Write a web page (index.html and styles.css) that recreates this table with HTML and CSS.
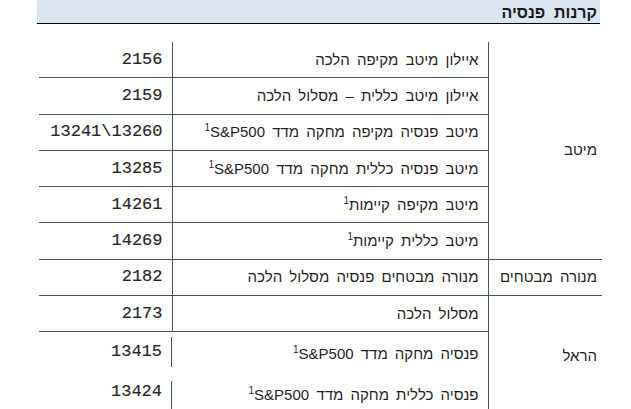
FILE: index.html
```html
<!DOCTYPE html>
<html lang="he" dir="rtl">
<head>
<meta charset="utf-8">
<title>קרנות פנסיה</title>
<link rel="stylesheet" href="styles.css">
</head>
<body>
<div class="sheet">
  <h1 class="title">קרנות&nbsp; פנסיה</h1>
  <table class="funds">
    <colgroup>
      <col class="c-group">
      <col class="c-name">
      <col class="c-num">
    </colgroup>
    <tbody>
      <tr>
        <td class="group" rowspan="6">מיטב</td>
        <td class="name">איילון מיטב מקיפה הלכה</td>
        <td class="num">2156</td>
      </tr>
      <tr>
        <td class="name">איילון מיטב כללית – מסלול הלכה</td>
        <td class="num">2159</td>
      </tr>
      <tr>
        <td class="name">מיטב פנסיה מקיפה מחקה מדד S&amp;P500<sup class="fn">1</sup></td>
        <td class="num">13241\13260</td>
      </tr>
      <tr>
        <td class="name">מיטב פנסיה כללית מחקה מדד S&amp;P500<sup class="fn">1</sup></td>
        <td class="num">13285</td>
      </tr>
      <tr>
        <td class="name">מיטב מקיפה קיימות<sup class="fn">1</sup></td>
        <td class="num">14261</td>
      </tr>
      <tr>
        <td class="name">מיטב כללית קיימות<sup class="fn">1</sup></td>
        <td class="num">14269</td>
      </tr>
      <tr>
        <td class="group">מנורה מבטחים</td>
        <td class="name">מנורה מבטחים פנסיה מסלול הלכה</td>
        <td class="num">2182</td>
      </tr>
      <tr>
        <td class="group" rowspan="3">הראל</td>
        <td class="name">מסלול הלכה</td>
        <td class="num">2173</td>
      </tr>
      <tr class="open">
        <td class="name name-open">פנסיה מחקה מדד S&amp;P500<sup class="fn">1</sup></td>
        <td class="num num-split"><div class="num-box">13415</div></td>
      </tr>
      <tr class="open">
        <td class="name name-open">פנסיה כללית מחקה מדד S&amp;P500<sup class="fn">1</sup></td>
        <td class="num num-split num-split-last"><div class="num-box num-box-last">13424</div></td>
      </tr>
    </tbody>
  </table>
</div>
</body>
</html>
```

FILE: styles.css
```css
html, body {
  margin: 0;
  padding: 0;
  background: #ffffff;
}

body {
  font-family: "Liberation Sans", Arial, sans-serif;
  color: #1f1f1f;
}

.sheet {
  width: 631px;
}

.title {
  margin: 0 31px 0 37px;
  height: 23px;
  padding: 0 3px 0 0;
  background: #dbe5f1;
  border-bottom: 1.5px solid #000000;
  font-size: 16px;
  font-weight: bold;
  line-height: 26px;
  color: #1a1a1a;
}

.funds {
  margin: 18px 29px 0 39px;
  width: 563px;
  border-collapse: collapse;
  table-layout: fixed;
}

.c-group { width: 114px; }
.c-name { width: 316px; }
.c-num { width: 133px; }

.funds td {
  height: 35.3px;
  padding: 0 9px;
  border-bottom: 1px solid #44546a;
  vertical-align: middle;
  font-size: 15px;
  word-spacing: 3px;
  white-space: nowrap;
  line-height: 18px;
}

.funds td.name {
  border-left: 1px solid #44546a;
  border-right: 1px solid #44546a;
  text-align: right;
}

.funds td.group {
  padding: 0 5px 0 0;
  text-align: right;
}

.funds td.num {
  direction: ltr;
  text-align: right;
  font-family: "Liberation Mono", "Courier New", monospace;
  font-size: 17px;
  font-weight: normal;
  color: #262626;
  -webkit-text-stroke: 0.15px #262626;
  word-spacing: 0;
}

.fn {
  unicode-bidi: isolate;
  font-size: 10px;
  vertical-align: 6px;
  line-height: 0;
}

.open td {
  border-bottom: none;
}

.funds td.name-open {
  border-left: none;
}

.funds td.num-split {
  padding: 5px 0 2px 0;
  vertical-align: top;
}

.funds td.num-split-last {
  padding-top: 6px;
  padding-bottom: 0;
}

.num-box {
  height: 30px;
  line-height: 30px;
  padding-right: 9px;
  border-right: 1px solid #44546a;
}

.num-box-last {
  height: 31px;
  line-height: 22px;
}
```
